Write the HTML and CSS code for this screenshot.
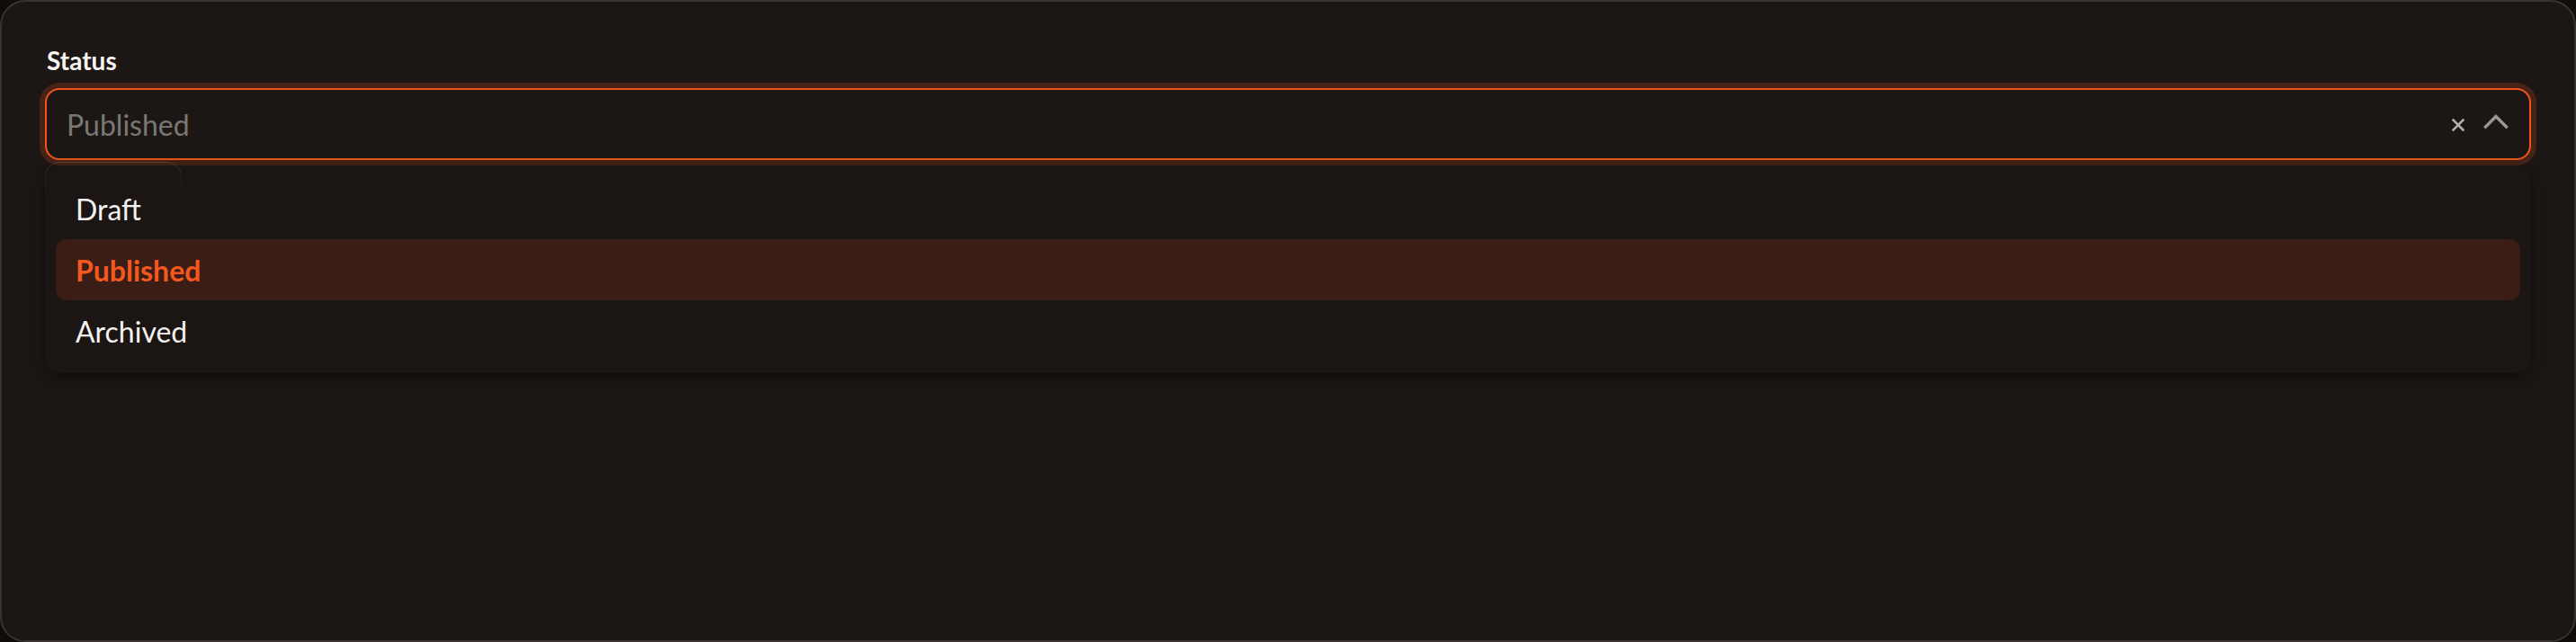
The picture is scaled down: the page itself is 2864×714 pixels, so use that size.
FILE: index.html
```html
<!DOCTYPE html>
<html lang="en">
<head>
<meta charset="utf-8">
<title>Status select</title>
<link rel="stylesheet" href="styles.css">
</head>
<body>
<div class="card">
  <label class="label" for="status">Status</label>
  <div class="select">
    <div class="control" id="status" role="combobox" aria-expanded="true">
      <span class="placeholder">Published</span>
      <div class="indicators">
        <svg class="clear" width="14" height="14" viewBox="0 0 14 14" aria-hidden="true">
          <path d="M1.5 1.5 L12.5 12.5 M12.5 1.5 L1.5 12.5" stroke="currentColor" stroke-width="2.6" fill="none" stroke-linecap="square"/>
        </svg>
        <svg class="chevron" width="28" height="18" viewBox="0 0 28 18" aria-hidden="true">
          <path d="M2.5 15 L14 3.5 L25.5 15" stroke="currentColor" stroke-width="3.4" fill="none" stroke-linecap="square" stroke-linejoin="miter"/>
        </svg>
      </div>
    </div>
    <div class="menu" role="listbox">
      <div class="option" role="option">Draft</div>
      <div class="option selected" role="option" aria-selected="true">Published</div>
      <div class="option" role="option">Archived</div>
    </div>
  </div>
</div>
</body>
</html>
```
FILE: styles.css
```css
html, body {
  margin: 0;
  padding: 0;
  background: #100c09;
}
body {
  font-family: "Lato", "Noto Sans", sans-serif;
  color: #f4f1ee;
}
.card {
  box-sizing: border-box;
  height: 714px;
  border: 2px solid #3a3330;
  border-radius: 28px;
  background: #1c1714;
  padding: 48px 48px 0 48px;
}
.label {
  display: block;
  font-size: 28px;
  font-weight: 700;
  line-height: 34px;
  margin-left: 2px;
  margin-bottom: 14px;
  color: #f7f4f1;
}
.select {
  position: relative;
}
.control {
  box-sizing: border-box;
  height: 80px;
  border: 2px solid #f0561c;
  border-radius: 16px;
  box-shadow: 0 0 0 6px rgba(240, 86, 28, 0.2);
  background: #1c1714;
  display: flex;
  align-items: center;
  padding: 0 23px 0 22px;
}
.placeholder {
  flex: 1;
  font-size: 32px;
  color: #7b7773;
}
.indicators {
  display: flex;
  align-items: center;
  gap: 21px;
}
.clear {
  color: #b3aea9;
  margin-top: 2px;
}
.chevron {
  color: #9b9692;
  margin-top: -7px;
}
.menu {
  position: absolute;
  left: 0;
  right: 0;
  top: calc(100% + 6px);
  box-sizing: border-box;
  background: #1b1613;
  border-radius: 16px;
  padding: 14px 12px 13px;
  box-shadow: 0 6px 20px rgba(0, 0, 0, 0.45);
  display: flex;
  flex-direction: column;
}
.menu::before {
  content: "";
  position: absolute;
  left: 0;
  top: -4px;
  width: 152px;
  height: 40px;
  box-sizing: border-box;
  border: 1px solid rgba(255, 255, 255, 0.14);
  border-bottom: none;
  border-radius: 16px 16px 0 0;
  -webkit-mask-image: linear-gradient(to bottom, #000 0%, rgba(0,0,0,0.4) 40%, transparent 100%);
  mask-image: linear-gradient(to bottom, #000 0%, rgba(0,0,0,0.4) 40%, transparent 100%);
  pointer-events: none;
}
.option {
  height: 68px;
  display: flex;
  align-items: center;
  padding: 0 22px;
  font-size: 32px;
  color: #f4f1ee;
  border-radius: 12px;
}
.option.selected {
  background: #3a1d14;
  color: #f2581f;
  font-weight: 700;
}
```
